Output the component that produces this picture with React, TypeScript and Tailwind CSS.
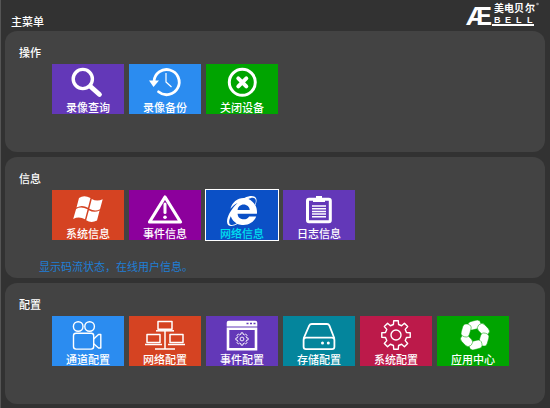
import type { ReactNode } from "react"
import { FaInternetExplorer } from "react-icons/fa"

const gearPath = (cx: number, cy: number, outer: number, inner: number) => {
    const points: string[] = []
    for (let i = 0; i < 8; i++) {
        const mid = (i * Math.PI) / 4
        const corners = [
            [inner, -0.24],
            [outer, -0.16],
            [outer, 0.16],
            [inner, 0.24],
        ]
        corners.forEach(([r, a]) => {
            const x = cx + r * Math.sin(mid + a)
            const y = cy - r * Math.cos(mid + a)
            points.push(`${x.toFixed(2)} ${y.toFixed(2)}`)
        })
    }
    return `M${points.join("L")}Z`
}

const Icon = ({ children }: { children: ReactNode }) => (
    <svg
        viewBox="0 0 36 36"
        className="size-9 overflow-visible"
        fill="none"
        stroke="white"
        strokeLinejoin="round"
        aria-hidden="true"
    >
        {children}
    </svg>
)

const SearchIcon = () => (
    <Icon>
        <circle cx="12.8" cy="15" r="9.6" strokeWidth="3.4" />
        <path d="M20.5 22.5 29.5 30.5" strokeWidth="4.8" strokeLinecap="round" />
    </Icon>
)

const BackupIcon = () => (
    <Icon>
        <path d="M7 17.5A12.6 12.6 0 1 1 11.5 27.8" strokeWidth="2.8" strokeLinecap="round" />
        <path d="M2 16.5H12L6.5 23Z" fill="white" stroke="none" />
        <path d="M19 9V18L24.5 23" strokeWidth="1.2" />
    </Icon>
)

const CloseIcon = () => (
    <Icon>
        <circle cx="18.3" cy="18.3" r="13" strokeWidth="3" />
        <path d="M14.3 14.3 22.3 22.3M22.3 14.3 14.3 22.3" strokeWidth="4" strokeLinecap="round" />
    </Icon>
)

const WindowsIcon = () => (
    <Icon>
        <g fill="white" stroke="none">
            <path d="M9 8Q14 4.5 20.5 8L18 17.8Q12 14.5 6.5 17.6Z" />
            <path d="M21.8 9Q27 12 32.7 9.2L30 19.2Q25 22 19.3 18.7Z" />
            <path d="M6.1 18.9Q11 16.2 17.6 19.2L15 29.2Q9 26 3.2 29Z" />
            <path d="M18.9 20.2Q24 23.3 29.6 20.6L27 30.6Q21 33.4 16.2 30.2Z" />
        </g>
    </Icon>
)

const WarningIcon = () => (
    <Icon>
        <path d="M18 7 33.5 32H2.5Z" strokeWidth="3.2" />
        <path d="M18 14V22.5" strokeWidth="3" strokeLinecap="round" />
        <circle cx="18" cy="27.2" r="1.8" fill="white" stroke="none" />
    </Icon>
)

const ExplorerIcon = () => (
    <span className="flex size-9 items-end justify-center">
        <FaInternetExplorer className="size-[30px]" color="white" aria-hidden="true" />
    </span>
)

const LogIcon = () => (
    <Icon>
        <rect x="6.5" y="9.2" width="22.8" height="22.6" rx="1.5" strokeWidth="3" />
        <path d="M12 8H15V6H21V8H24V12H12Z" fill="white" stroke="none" />
        <path d="M11 16H25M11 18.7H25M11 21.4H25M11 24.1H25M11 26.8H25" strokeWidth="1.5" />
    </Icon>
)

const CameraIcon = () => (
    <Icon>
        <g strokeWidth="1.4">
            <circle cx="8.2" cy="10.5" r="4.8" />
            <circle cx="19.6" cy="10.5" r="4.8" />
            <rect x="3.5" y="17.3" width="20.2" height="15.8" rx="2.5" />
            <path d="M23.7 23 28.5 18.5H30.8V32H28.5L23.7 27.8" />
        </g>
    </Icon>
)

const NetworkIcon = () => (
    <Icon>
        <g strokeWidth="1.5">
            <rect x="11" y="5.4" width="14" height="7.8" />
            <path d="M9 14.8H27" />
            <rect x="0" y="18.4" width="13" height="8" />
            <path d="M-2 28.5H15" />
            <rect x="23" y="18.4" width="13" height="8" />
            <path d="M21 28.5H38" />
            <path d="M18 15V33" />
            <path d="M8 33H28" />
        </g>
    </Icon>
)

const EventConfigIcon = () => (
    <Icon>
        <path d="M2.7 10.6V6.7A2 2 0 0 1 4.7 4.7H31.3A2 2 0 0 1 33.3 6.7V10.6Z" fill="white" stroke="none" />
        <path d="M22.5 7.5H24.5M26 7.5H28M29.5 7.5H31.5" stroke="#6338b8" strokeWidth="1.6" />
        <path d="M4 12.7H32V33.2H4Z" strokeWidth="2.6" strokeLinejoin="miter" />
        <path d={gearPath(18, 23, 6.2, 4.8)} strokeWidth="0.9" />
        <circle cx="18" cy="23" r="1.9" strokeWidth="0.9" />
    </Icon>
)

const StorageIcon = () => (
    <Icon>
        <g strokeWidth="1.8">
            <path d="M2.6 22.5 8.2 9.6Q9 8 10.8 8H26Q27.7 8 28.4 9.6L33.4 22.5" />
            <rect x="2.6" y="21.6" width="30.8" height="11.6" rx="2.4" />
        </g>
        <circle cx="21.5" cy="27" r="1.5" fill="white" stroke="none" />
        <circle cx="27.3" cy="27" r="1.5" fill="white" stroke="none" />
    </Icon>
)

const GearIcon = () => (
    <Icon>
        <path d={gearPath(18, 19, 14.4, 10.8)} strokeWidth="1.4" />
        <circle cx="18" cy="19" r="5" strokeWidth="1.4" />
    </Icon>
)

const AppsIcon = () => (
    <Icon>
        {[0, 60, 120, 180, 240, 300].map((angle) => (
            <rect
                key={angle}
                x="13"
                y="4.6"
                width="13"
                height="8.6"
                rx="4"
                fill="white"
                stroke="#00a400"
                strokeWidth="0.5"
                transform={`rotate(${angle} 20 19) rotate(-14 20 9)`}
            />
        ))}
    </Icon>
)

const sections = [
    {
        title: "操作",
        hint: "",
        items: [
            { name: "录像查询", color: "bg-[#6338b8]", icon: <SearchIcon /> },
            { name: "录像备份", color: "bg-[#2b8cf0]", icon: <BackupIcon /> },
            { name: "关闭设备", color: "bg-[#00a400]", icon: <CloseIcon /> },
        ],
    },
    {
        title: "信息",
        hint: "显示码流状态，在线用户信息。",
        items: [
            { name: "系统信息", color: "bg-[#d54322]", icon: <WindowsIcon /> },
            { name: "事件信息", color: "bg-[#8c009c]", icon: <WarningIcon /> },
            { name: "网络信息", color: "bg-[#0b50c6]", icon: <ExplorerIcon />, active: true },
            { name: "日志信息", color: "bg-[#6338b8]", icon: <LogIcon /> },
        ],
    },
    {
        title: "配置",
        hint: "",
        items: [
            { name: "通道配置", color: "bg-[#2b8cf0]", icon: <CameraIcon /> },
            { name: "网络配置", color: "bg-[#d54322]", icon: <NetworkIcon /> },
            { name: "事件配置", color: "bg-[#6338b8]", icon: <EventConfigIcon /> },
            { name: "存储配置", color: "bg-[#04859c]", icon: <StorageIcon /> },
            { name: "系统配置", color: "bg-[#bc1a4a]", icon: <GearIcon /> },
            { name: "应用中心", color: "bg-[#00a400]", icon: <AppsIcon /> },
        ],
    },
]

const Logo = () => (
    <svg viewBox="0 0 76 31" className="h-[31px] w-[76px] overflow-visible" fill="white" role="img" aria-label="美电贝尔 AEBELL">
        <text x="1" y="25" fontSize="26" fontWeight="700" fontFamily="Liberation Sans, sans-serif">Æ</text>
        <text x="29 39 49 60" y="12" fontSize="10" fontWeight="700" fontFamily="Noto Sans CJK SC, sans-serif">美电贝尔</text>
        <text x="29 40 51 62" y="23" fontSize="9" fontWeight="700" fontFamily="Liberation Sans, sans-serif">BELL</text>
        <rect x="27" y="24" width="42" height="2" />
        <circle cx="72.5" cy="4" r="1.3" fill="#999999" />
    </svg>
)

export default function App() {
    return (
        <main className="min-h-screen border-l border-[#555555] bg-[#323232] pr-[5px] pb-1 pl-1 font-['Liberation_Sans','Noto_Sans_CJK_SC',sans-serif] text-[11px] leading-[12px] text-white">
            <header className="flex h-[31px] items-start justify-between pr-1 pl-[6px]">
                <h1 className="pt-4 font-medium">主菜单</h1>
                <Logo />
            </header>
            <div className="flex flex-col gap-[5px]">
                {sections.map((section) => (
                    <section key={section.title} className="min-h-[121px] rounded-xl bg-[#434343] px-[14px] pt-4">
                        <h2 className="font-medium">{section.title}</h2>
                        <div className="mt-[5px] ml-[33px] flex gap-[5px]">
                            {section.items.map((item) => (
                                <button
                                    key={item.name}
                                    type="button"
                                    className={`flex h-[50px] w-[72px] flex-col items-center ${item.color} ${
                                        item.active ? "text-[#00e0f0] outline outline-white" : ""
                                    }`}
                                >
                                    {item.icon}
                                    <span className="pt-0.5 font-medium">{item.name}</span>
                                </button>
                            ))}
                        </div>
                        {section.hint && <p className="mt-[21px] pl-5 text-[#1f7fd6]">{section.hint}</p>}
                    </section>
                ))}
            </div>
        </main>
    )
}
